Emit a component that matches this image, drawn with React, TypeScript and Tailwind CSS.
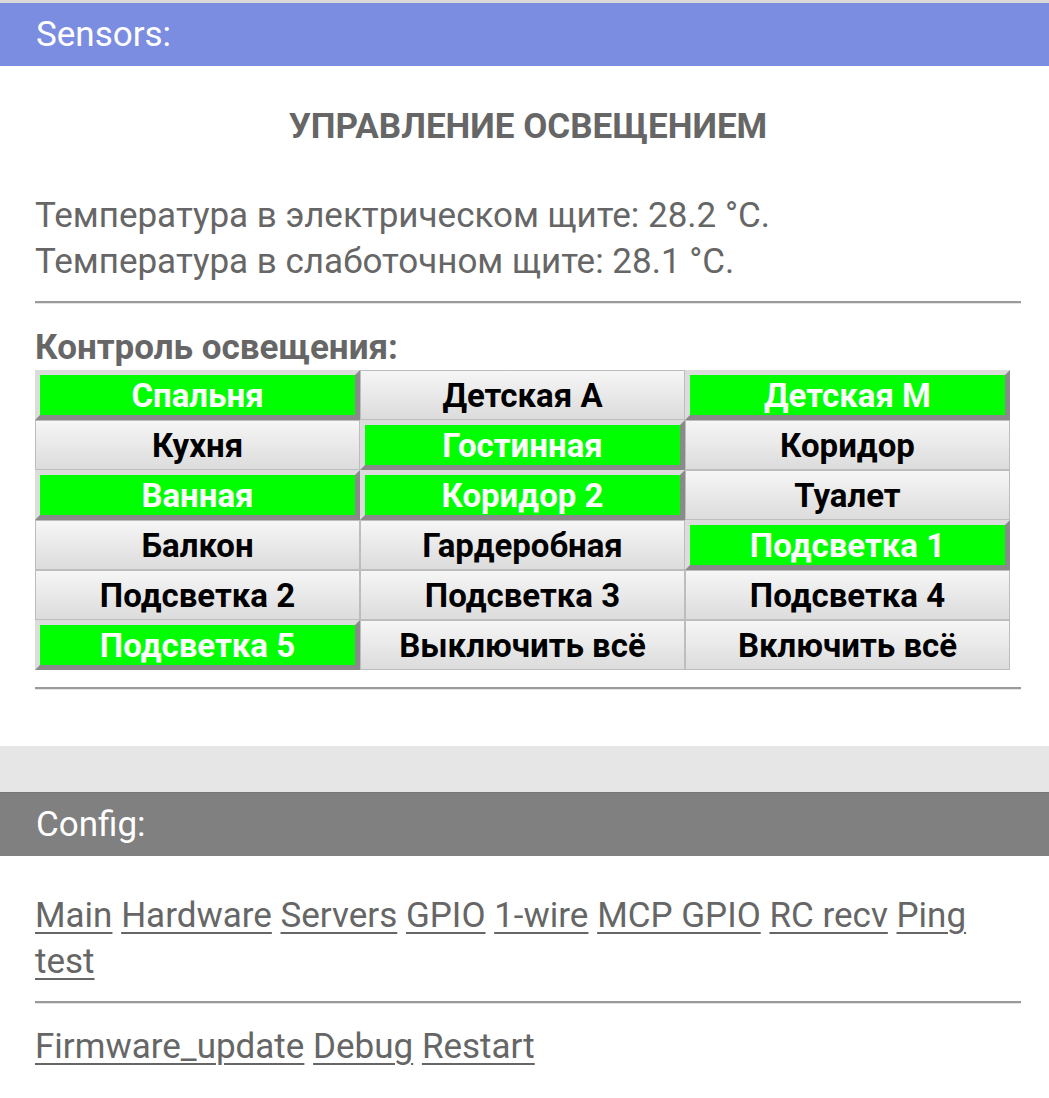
import React from 'react';

const lights = [
  { name: 'Спальня', on: true },
  { name: 'Детская А', on: false },
  { name: 'Детская М', on: true },
  { name: 'Кухня', on: false },
  { name: 'Гостинная', on: true },
  { name: 'Коридор', on: false },
  { name: 'Ванная', on: true },
  { name: 'Коридор 2', on: true },
  { name: 'Туалет', on: false },
  { name: 'Балкон', on: false },
  { name: 'Гардеробная', on: false },
  { name: 'Подсветка 1', on: true },
  { name: 'Подсветка 2', on: false },
  { name: 'Подсветка 3', on: false },
  { name: 'Подсветка 4', on: false },
  { name: 'Подсветка 5', on: true },
  { name: 'Выключить всё', on: false },
  { name: 'Включить всё', on: false },
];

const configLinks = ['Main', 'Hardware', 'Servers', 'GPIO', '1-wire', 'MCP GPIO', 'RC recv', 'Ping test'];
const systemLinks = ['Firmware_update', 'Debug', 'Restart'];

const Rule = () => (
  <div className="h-[3px] border-t-2 border-t-[#9a9a9a] border-b border-b-[#e4e4e4]" />
);

const App = () => {
  return (
    <div className="w-[1049px] min-h-[1098px] bg-white text-[#666] font-['Roboto',sans-serif] text-[35px] leading-[46px] border-t-[3px] border-t-[#d9d9d9]">
      {/* Sensors */}
      <div className="h-[63px] bg-[#7b8de0] text-white flex items-center pl-[36px]">Sensors:</div>
      <div className="pl-[35px] pr-[28px]">
        <h1 className="pt-[38px] text-center font-bold">УПРАВЛЕНИЕ ОСВЕЩЕНИЕМ</h1>
        <div className="mt-[43px]">
          <p>Температура в электрическом щите: 28.2 °C.</p>
          <p>Температура в слаботочном щите: 28.1 °C.</p>
        </div>
        <div className="mt-[16px]">
          <Rule />
        </div>
        <p className="mt-[21px] leading-[45px] font-bold">Контроль освещения:</p>
        <div className="grid grid-cols-3 w-[975px]">
          {lights.map((l) =>
            l.on ? (
              <button
                key={l.name}
                className="h-[50px] bg-[#00ff00] text-white font-bold text-[33px] leading-none border-[5px] border-t-[#dcdcdc] border-l-[#dcdcdc] border-b-[#8a8a8a] border-r-[#8a8a8a]"
              >
                {l.name}
              </button>
            ) : (
              <button
                key={l.name}
                className="h-[50px] bg-gradient-to-b from-[#f6f6f6] to-[#dcdcdc] text-black font-bold text-[33px] leading-none border border-[#bdbdbd]"
              >
                {l.name}
              </button>
            )
          )}
        </div>
        <div className="mt-[17px]">
          <Rule />
        </div>
      </div>
      <div className="h-[46px] bg-[#e6e6e6] mt-[56px]" />

      {/* Config */}
      <div className="h-[64px] bg-[#808080] text-white flex items-center pl-[36px] border-t border-t-[#777]">Config:</div>
      <div className="pl-[35px] pr-[28px]">
        <div className="mt-[37px]">
          {configLinks.map((c, i) => (
            <React.Fragment key={c}>
              <a href="#" className="underline underline-offset-[5px] decoration-[2px]">{c}</a>
              {i < configLinks.length - 1 ? ' ' : ''}
            </React.Fragment>
          ))}
        </div>
        <div className="mt-[16px]">
          <Rule />
        </div>
        <div className="mt-[20px]">
          {systemLinks.map((c, i) => (
            <React.Fragment key={c}>
              <a href="#" className="underline underline-offset-[5px] decoration-[2px]">{c}</a>
              {i < systemLinks.length - 1 ? ' ' : ''}
            </React.Fragment>
          ))}
        </div>
      </div>
    </div>
  );
};

export default App;
